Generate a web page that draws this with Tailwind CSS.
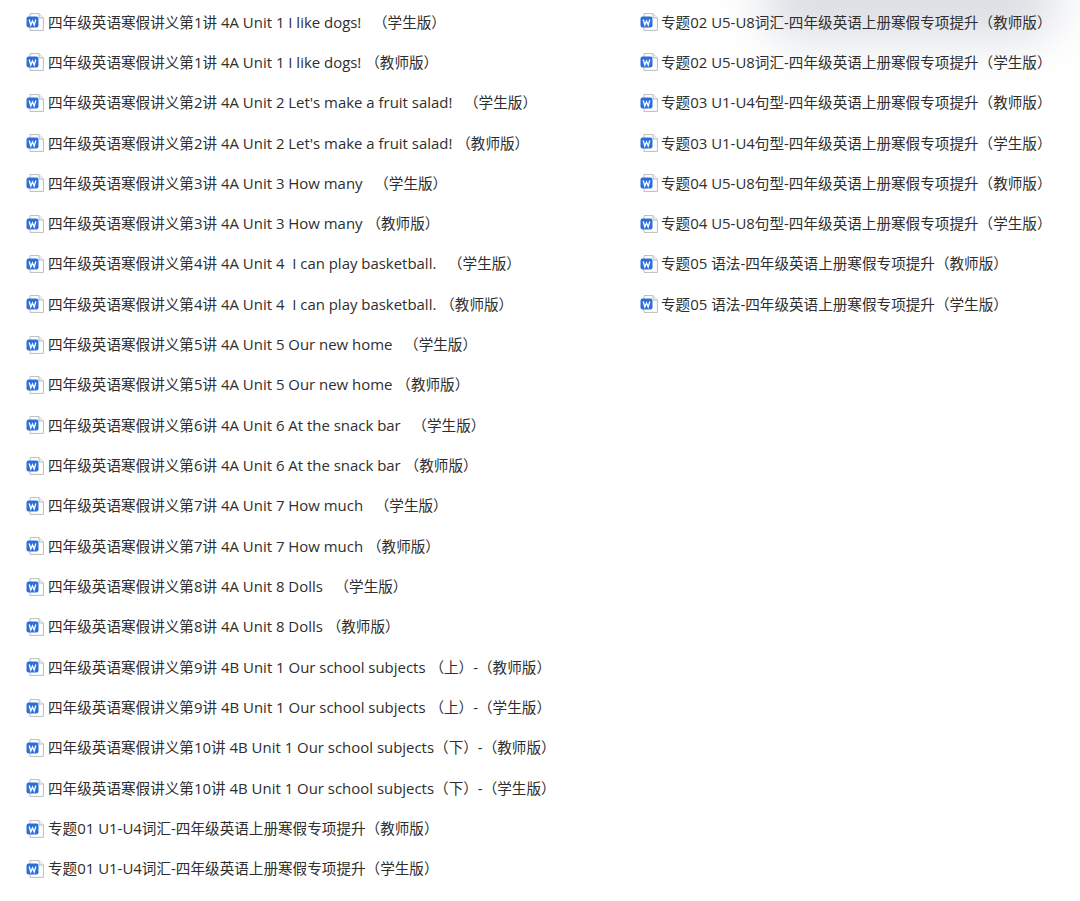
<!DOCTYPE html>
<html lang="en">
<head>
    <meta charset="UTF-8">
    <title>Files</title>
    <script src="https://cdn.jsdelivr.net/npm/@tailwindcss/browser@4"></script>
</head>
<body class="bg-white">
    <main class="relative w-[1080px] h-[901px] overflow-hidden flex font-['Open_Sans','Noto_Sans_CJK_SC',sans-serif] text-[14.6px] text-[#2e2e2e]">
        <!-- grey smudge behind the top right rows -->
        <div class="absolute left-[760px] top-[-45px] w-[300px] h-[85px] rounded-full bg-gray-400/35 blur-[24px]"></div>
        <ul id="left" class="relative w-[640px] pl-[26px] pt-[1.8px]"></ul>
        <ul id="right" class="relative flex-1 pt-[1.8px]"></ul>
    </main>

    <script>
        const left = [
            "四年级英语寒假讲义第1讲 4A Unit 1 I like dogs!   （学生版）",
            "四年级英语寒假讲义第1讲 4A Unit 1 I like dogs! （教师版）",
            "四年级英语寒假讲义第2讲 4A Unit 2 Let's make a fruit salad!   （学生版）",
            "四年级英语寒假讲义第2讲 4A Unit 2 Let's make a fruit salad! （教师版）",
            "四年级英语寒假讲义第3讲 4A Unit 3 How many   （学生版）",
            "四年级英语寒假讲义第3讲 4A Unit 3 How many （教师版）",
            "四年级英语寒假讲义第4讲 4A Unit 4  I can play basketball.   （学生版）",
            "四年级英语寒假讲义第4讲 4A Unit 4  I can play basketball. （教师版）",
            "四年级英语寒假讲义第5讲 4A Unit 5 Our new home   （学生版）",
            "四年级英语寒假讲义第5讲 4A Unit 5 Our new home （教师版）",
            "四年级英语寒假讲义第6讲 4A Unit 6 At the snack bar   （学生版）",
            "四年级英语寒假讲义第6讲 4A Unit 6 At the snack bar （教师版）",
            "四年级英语寒假讲义第7讲 4A Unit 7 How much   （学生版）",
            "四年级英语寒假讲义第7讲 4A Unit 7 How much （教师版）",
            "四年级英语寒假讲义第8讲 4A Unit 8 Dolls   （学生版）",
            "四年级英语寒假讲义第8讲 4A Unit 8 Dolls （教师版）",
            "四年级英语寒假讲义第9讲 4B Unit 1 Our school subjects （上）-（教师版）",
            "四年级英语寒假讲义第9讲 4B Unit 1 Our school subjects （上）-（学生版）",
            "四年级英语寒假讲义第10讲 4B Unit 1 Our school subjects（下）-（教师版）",
            "四年级英语寒假讲义第10讲 4B Unit 1 Our school subjects（下）-（学生版）",
            "专题01 U1-U4词汇-四年级英语上册寒假专项提升（教师版）",
            "专题01 U1-U4词汇-四年级英语上册寒假专项提升（学生版）"
        ];
        const right = [
            "专题02 U5-U8词汇-四年级英语上册寒假专项提升（教师版）",
            "专题02 U5-U8词汇-四年级英语上册寒假专项提升（学生版）",
            "专题03 U1-U4句型-四年级英语上册寒假专项提升（教师版）",
            "专题03 U1-U4句型-四年级英语上册寒假专项提升（学生版）",
            "专题04 U5-U8句型-四年级英语上册寒假专项提升（教师版）",
            "专题04 U5-U8句型-四年级英语上册寒假专项提升（学生版）",
            "专题05 语法-四年级英语上册寒假专项提升（教师版）",
            "专题05 语法-四年级英语上册寒假专项提升（学生版）"
        ];

        // Word file icon: white page with folded corner, blue W tile on its left
        const icon = `
            <svg class="w-[18px] h-[18px] shrink-0" viewBox="0 0 18 18">
                <path d="M4 .6H13L17.4 5V17.4H4Z" fill="#fff" stroke="#b9bcc2"/>
                <path d="M13 .6V5H17.4" fill="#eceef1" stroke="#b9bcc2"/>
                <rect x=".5" y="3.5" width="12" height="11" rx="2.2" fill="#2a6fdb"/>
                <path d="M3.2 6.5L4.8 12L6.5 8L8.2 12L9.8 6.5" fill="none" stroke="#fff" stroke-width="1.3"/>
            </svg>`;

        // Latin runs sit a little larger than the Chinese in the original
        function markLatin(text) {
            return text.replace(/[A-Za-z0-9 .!'-]+/g, m => `<span class="text-[14.95px]">${m}</span>`);
        }

        function renderList(id, items, gap) {
            document.getElementById(id).innerHTML = items.map(text => `
                <li class="flex items-center ${gap} h-[40.33px] whitespace-pre">
                    ${icon}
                    <span>${markLatin(text)}</span>
                </li>`).join("");
        }

        renderList("left", left, "gap-[4px]");
        renderList("right", right, "gap-[3px]");
    </script>
</body>
</html>
